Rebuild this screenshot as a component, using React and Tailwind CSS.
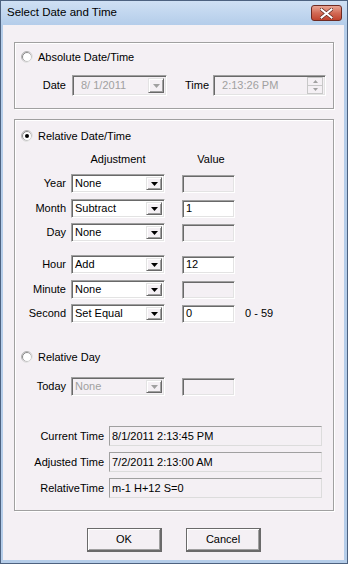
import React from "react";

const FONT = { fontFamily: '"Liberation Sans", Arial, sans-serif' };

// small classic radio circle
function Radio({ checked }) {
  return (
    <svg width="12" height="12" viewBox="0 0 12 12" className="shrink-0">
      <defs>
        <linearGradient id="rg" x1="0" y1="0" x2="1" y2="1">
          <stop offset="0" stopColor="#9a9a9a" />
          <stop offset="1" stopColor="#ffffff" />
        </linearGradient>
        <linearGradient id="rg2" x1="0" y1="0" x2="1" y2="1">
          <stop offset="0" stopColor="#6e6e6e" />
          <stop offset="1" stopColor="#e4e4e4" />
        </linearGradient>
      </defs>
      <circle cx="6" cy="6" r="5.5" fill="none" stroke="url(#rg)" />
      <circle cx="6" cy="6" r="4.5" fill="#ffffff" stroke="url(#rg2)" />
      {checked && <circle cx="6" cy="6" r="2" fill="#000" />}
    </svg>
  );
}

function Arrow({ disabled }) {
  return (
    <div className="w-[16px] h-full shrink-0 bg-[#f4f0f4] border-t border-l border-[#e3e3e3] border-r border-b border-r-[#696969] border-b-[#696969] shadow-[inset_1px_1px_0_#fff,inset_-1px_-1px_0_#a0a0a0] flex items-center justify-center">
      <svg width="7" height="4" viewBox="0 0 7 4">
        <path d="M0 0H7L3.5 4Z" fill={disabled ? "#a0a0a0" : "#000"} />
      </svg>
    </div>
  );
}

const sunken =
  "border border-t-[#a0a0a0] border-l-[#a0a0a0] border-r-white border-b-white shadow-[inset_1px_1px_0_#696969,inset_-1px_-1px_0_#e3e3e3]";

function Combo({ value, disabled, w = "w-[94px]", h = "h-[19px]", pad = "pl-[1px]" }) {
  return (
    <div className={`${w} ${h} ${sunken} ${disabled ? "bg-[#f4f0f4] text-[#a0a0a0]" : "bg-white text-black"} flex p-[2px]`}>
      <div className={`flex-1 flex items-center ${pad} leading-none`}>{value}</div>
      <Arrow disabled={disabled} />
    </div>
  );
}

function ValueBox({ value, disabled }) {
  return (
    <div className={`w-[53px] h-[18px] ${sunken} ${disabled ? "bg-[#f4f0f4]" : "bg-white"} flex items-center pl-[3px] leading-none`}>
      {value}
    </div>
  );
}

function AdjRow({ label, value, num, numDisabled, extra, mt }) {
  return (
    <div className={`flex items-center ${mt}`}>
      <div className="w-[51px] text-right">{label}</div>
      <div className="ml-[5px]">
        <Combo value={value} />
      </div>
      <div className="ml-[17px]">
        <ValueBox value={num} disabled={numDisabled} />
      </div>
      {extra && <div className="ml-[10px]">{extra}</div>}
    </div>
  );
}

function InfoRow({ label, value, mt }) {
  return (
    <div className={`flex items-center ${mt}`}>
      <div className="w-[89px] text-right">{label}</div>
      <div className="ml-[5px] w-[213px] h-[20px] border border-t-[#a0a0a0] border-l-[#a0a0a0] border-r-[#dcdcdc] border-b-[#dcdcdc] flex items-center pl-[2px] leading-none">
        {value}
      </div>
    </div>
  );
}

function Button({ children }) {
  return (
    <button className="w-[75px] h-[24px] bg-[#f4f0f4] border border-[#6a6a6a] border-r-2 border-b-2 shadow-[inset_1px_1px_0_#fff,inset_-1px_-1px_0_#a0a0a0] text-[11px] text-black">
      {children}
    </button>
  );
}

export default function App() {
  return (
    <div
      className="w-[348px] h-[564px] bg-[#b5cde9] border border-[#4d6280] pl-[2px] pr-[3px] pb-[3px] flex flex-col text-[11px] text-black"
      style={FONT}
    >
      {/* title bar */}
      <div className="h-[24px] -mx-[2px] -mr-[3px] bg-gradient-to-b from-[#cfe0f4] to-[#b4cdea] flex items-center pl-[6px] pr-[5px] shrink-0">
        <div className="text-[11.5px] text-black flex-1">Select Date and Time</div>
        <div className="w-[31px] h-[16px] rounded-[3px] border border-[#6e2a22] bg-gradient-to-b from-[#e8a595] via-[#d26a55] to-[#c0432e] flex items-center justify-center">
          <svg width="13" height="11" viewBox="0 0 13 11">
            <path d="M1.5 1.5L11.5 9.5M11.5 1.5L1.5 9.5" stroke="#5a241c" strokeWidth="3.4" strokeLinecap="square" />
            <path d="M1.5 1.5L11.5 9.5M11.5 1.5L1.5 9.5" stroke="#fff" strokeWidth="2" strokeLinecap="square" />
          </svg>
        </div>
      </div>

      {/* client area */}
      <div className="flex-1 bg-[#f4f0f4] pt-[17px] pl-[11px]">
        {/* absolute group */}
        <div className="w-[320px] h-[67px] border border-[#a0a0a0] shadow-[inset_1px_1px_0_#fff,1px_1px_0_#fff] pt-[8px]">
          <div className="flex items-center h-[12px] pl-[6px]">
            <Radio />
            <span className="ml-[5px]">Absolute Date/Time</span>
          </div>
          <div className="flex items-center mt-[12px]">
            <div className="w-[51px] text-right">Date</div>
            <div className="ml-[6px]">
              <Combo value="8/ 1/2011" disabled w="w-[95px]" h="h-[21px]" pad="pl-[6px]" />
            </div>
            <div className="ml-[18px]">Time</div>
            <div className={`ml-[4px] w-[113px] h-[21px] ${sunken} bg-[#f4f0f4] text-[#a0a0a0] flex items-center pl-[3px] pr-[2px]`}>
              <span className="flex-1 pl-[5px] leading-none">2:13:26 PM</span>
              <div className="w-[16px] h-full flex flex-col py-[1px]">
                <div className="flex-1 border border-[#c8c8c8] flex items-center justify-center">
                  <svg width="5" height="3" viewBox="0 0 5 3"><path d="M0 3H5L2.5 0Z" fill="#a0a0a0" /></svg>
                </div>
                <div className="flex-1 border border-t-0 border-[#c8c8c8] flex items-center justify-center">
                  <svg width="5" height="3" viewBox="0 0 5 3"><path d="M0 0H5L2.5 3Z" fill="#a0a0a0" /></svg>
                </div>
              </div>
            </div>
          </div>
        </div>

        {/* relative group */}
        <div className="mt-[10px] w-[320px] h-[392px] border border-[#a0a0a0] shadow-[inset_1px_1px_0_#fff,1px_1px_0_#fff] pt-[10px]">
          <div className="flex items-center h-[12px] pl-[6px]">
            <Radio checked />
            <span className="ml-[5px]">Relative Date/Time</span>
          </div>
          <div className="flex items-center mt-[10px] h-[14px]">
            <div className="w-[56px]" />
            <div className="w-[94px] text-center">Adjustment</div>
            <div className="ml-[17px] w-[53px] text-center pl-[5px]">Value</div>
          </div>
          <AdjRow label="Year" value="None" num="" numDisabled mt="mt-[8px]" />
          <AdjRow label="Month" value="Subtract" num="1" mt="mt-[6px]" />
          <AdjRow label="Day" value="None" num="" numDisabled mt="mt-[5px]" />
          <AdjRow label="Hour" value="Add" num="12" mt="mt-[13px]" />
          <AdjRow label="Minute" value="None" num="" numDisabled mt="mt-[6px]" />
          <AdjRow label="Second" value="Set Equal" num="0" extra="0 - 59" mt="mt-[5px]" />

          <div className="flex items-center h-[12px] pl-[6px] mt-[28px]">
            <Radio />
            <span className="ml-[5px]">Relative Day</span>
          </div>
          <div className="flex items-center mt-[14px]">
            <div className="w-[51px] text-right">Today</div>
            <div className="ml-[5px]">
              <Combo value="None" disabled />
            </div>
            <div className="ml-[17px]">
              <ValueBox value="" disabled />
            </div>
          </div>

          <InfoRow label="Current Time" value="8/1/2011 2:13:45 PM" mt="mt-[30px]" />
          <InfoRow label="Adjusted Time" value="7/2/2011 2:13:00 AM" mt="mt-[6px]" />
          <InfoRow label="RelativeTime" value="m-1 H+12 S=0" mt="mt-[6px]" />
        </div>

        <div className="flex mt-[17px] pl-[73px] gap-[24px]">
          <Button>OK</Button>
          <Button>Cancel</Button>
        </div>
      </div>
    </div>
  );
}
